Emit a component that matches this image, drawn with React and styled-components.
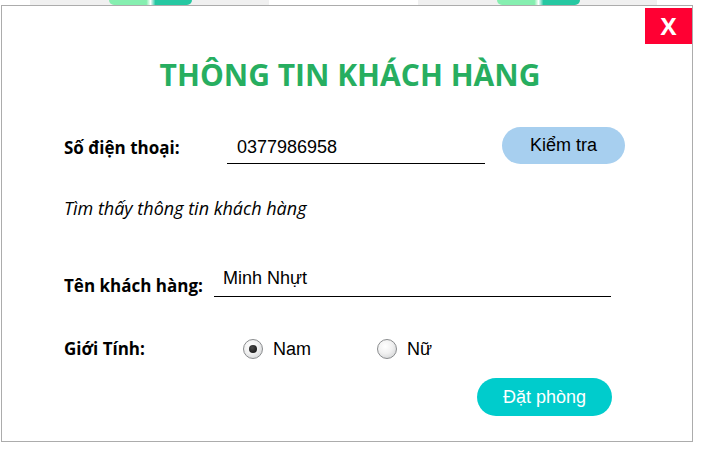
import React from 'react'
import styled, { createGlobalStyle } from 'styled-components'

const GlobalStyle = createGlobalStyle`
    body {
        margin: 0;
        background: #ffffff;
        font-family: "Open Sans", "Noto Sans", sans-serif;
    }
`

const Page = styled.div`
    width: 706px;
    height: 451px;
    overflow: hidden;
`

const Strip = styled.div`
    height: 5px;
    display: flex;
    gap: 149px;
    padding-left: 30px;
`

const StripCard = styled.div`
    width: 239px;
    height: 5px;
    background: #f0f0f0;
    padding-left: 79px;
    box-sizing: border-box;
`

const StripBadge = styled.div`
    width: 83px;
    height: 5px;
    border-radius: 0 0 10px 10px;
    background: linear-gradient(90deg, #86efb0 0%, #86efb0 45%, #ffffff 50%, #26c8a2 56%, #26c8a2 100%);
`

const Dialog = styled.div`
    position: relative;
    margin-left: 1px;
    width: 692px;
    height: 437px;
    box-sizing: border-box;
    border: 1px solid #acacac;
    padding: 49px 80px 0 62px;
    display: flex;
    flex-direction: column;
`

const Close = styled.button`
    position: absolute;
    top: 2px;
    right: 0;
    width: 47px;
    height: 36px;
    border: none;
    background: #ff0033;
    color: #ffffff;
    font-family: "Open Sans", sans-serif;
    font-weight: 700;
    font-size: 24px;
    line-height: 36px;
    padding: 0;
`

const Title = styled.h1`
    margin: 0 0 32px -59px;
    width: 690px;
    text-align: center;
    font-family: "Open Sans", sans-serif;
    font-weight: 700;
    font-size: 30px;
    line-height: 40px;
    color: #27ae60;
`

const Row = styled.div`
    display: flex;
    align-items: ${p => p.$align || 'center'};
    margin-top: ${p => p.$top || 0}px;
    height: ${p => p.$height}px;
`

const Label = styled.div`
    width: ${p => p.$width}px;
    flex: none;
    font-family: "Open Sans", sans-serif;
    font-weight: 700;
    font-size: 17px;
    line-height: 22px;
    color: #000000;
    padding-top: ${p => p.$shift || 0}px;
`

const Field = styled.input`
    flex: none;
    width: ${p => p.$width}px;
    height: ${p => p.$height}px;
    box-sizing: border-box;
    border: none;
    border-bottom: 1px solid #000000;
    outline: none;
    background: transparent;
    font-family: "Liberation Sans", Arial, sans-serif;
    font-size: 18px;
    color: #000000;
    padding: ${p => p.$pad};
`

const PillButton = styled.button`
    flex: none;
    width: ${p => p.$width}px;
    height: ${p => p.$height}px;
    margin-left: ${p => p.$left || 0}px;
    border: none;
    border-radius: 19px;
    background: ${p => p.$bg};
    color: ${p => p.$color};
    font-family: "Liberation Sans", Arial, sans-serif;
    font-size: 18px;
    padding: 0;
`

const Message = styled.div`
    margin-top: 32px;
    font-family: "Open Sans", sans-serif;
    font-style: italic;
    font-size: 18px;
    line-height: 24px;
    color: #000000;
`

const RadioOption = styled.label`
    display: flex;
    align-items: center;
    gap: 10px;
    margin-right: ${p => p.$right || 0}px;
    font-family: "Liberation Sans", Arial, sans-serif;
    font-size: 18px;
    color: #000000;
`

const RadioDot = styled.span`
    width: 18px;
    height: 18px;
    border-radius: 50%;
    border: 1px solid #8a8c8e;
    background: radial-gradient(circle at 40% 35%, #ffffff 0%, #f1f1f1 45%, #c9cbcd 100%);
    display: flex;
    align-items: center;
    justify-content: center;

    &::after {
        content: '';
        width: 8px;
        height: 8px;
        border-radius: 50%;
        background: ${p => p.$checked ? 'radial-gradient(circle at 40% 35%, #4a4a4a, #0a0a0a)' : 'transparent'};
    }
`

const Footer = styled.div`
    display: flex;
    justify-content: flex-end;
    margin-top: 17px;
`

const App = () => (
    <Page>
        <GlobalStyle />
        <Strip>
            <StripCard><StripBadge /></StripCard>
            <StripCard><StripBadge /></StripCard>
        </Strip>
        <Dialog>
            <Close>X</Close>
            <Title>THÔNG TIN KHÁCH HÀNG</Title>
            <Row $height={37}>
                <Label $width={163} $shift={5}>Số điện thoại:</Label>
                <Field $width={258} $height={37} $pad="4px 0 0 10px" defaultValue="0377986958" />
                <PillButton $width={123} $height={37} $left={17} $bg="#a7cfef" $color="#000000">Kiểm tra</PillButton>
            </Row>
            <Message>Tìm thấy thông tin khách hàng</Message>
            <Row $height={31} $top={46} $align="flex-end">
                <Label $width={150}>Tên khách hàng:</Label>
                <Field $width={397} $height={31} $pad="2px 0 8px 9px" defaultValue="Minh Nhựt" />
            </Row>
            <Row $height={24} $top={40}>
                <Label $width={179}>Giới Tính:</Label>
                <RadioOption $right={66}>
                    <RadioDot $checked />
                    Nam
                </RadioOption>
                <RadioOption>
                    <RadioDot />
                    Nữ
                </RadioOption>
            </Row>
            <Footer>
                <PillButton $width={135} $height={38} $bg="#00cccc" $color="#ffffff">Đặt phòng</PillButton>
            </Footer>
        </Dialog>
    </Page>
)

export default App
